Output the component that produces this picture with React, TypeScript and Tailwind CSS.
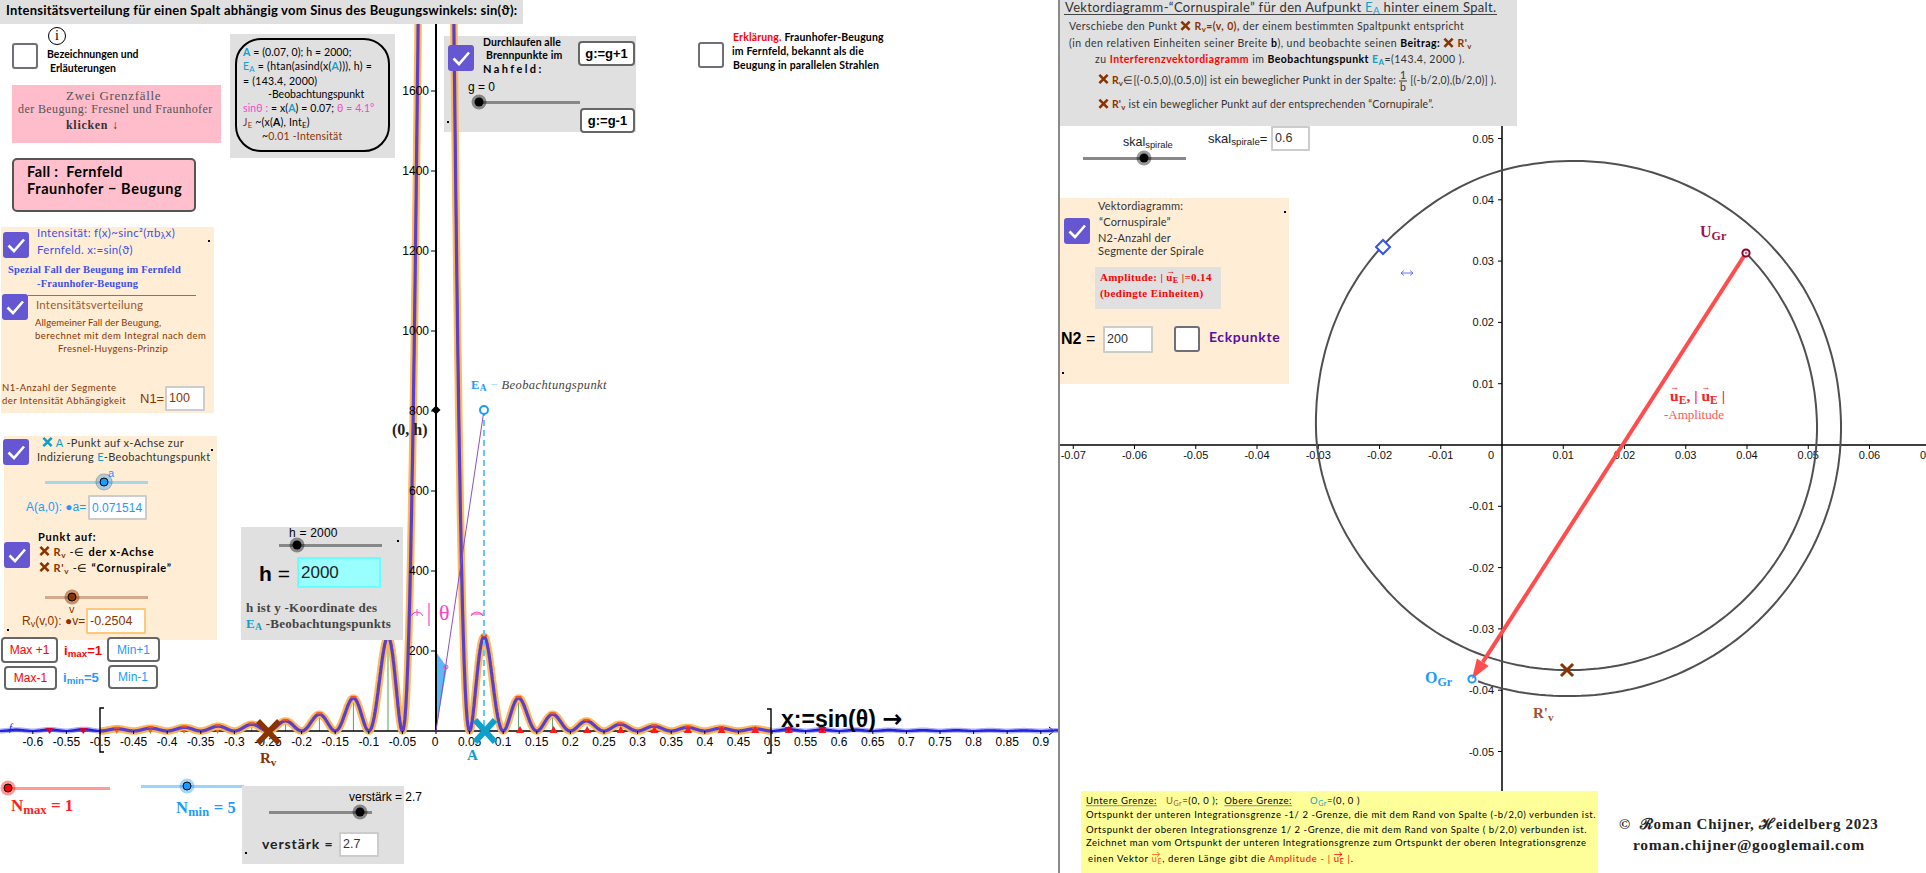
import React from "react";

const SERIF = "font-['Liberation_Serif',serif]";
const ARIAL = "font-['Liberation_Sans',sans-serif]";

type P = { c?: string; children?: React.ReactNode };

const T = ({ c = "", children }: P) => (
  <div className={`absolute whitespace-nowrap leading-none -translate-y-1/2 ${c}`}>{children}</div>
);

const Box = ({ c = "", children }: P) => <div className={`absolute ${c}`}>{children}</div>;

const Dot = ({ c = "" }: P) => <div className={`absolute w-[2px] h-[2px] bg-black ${c}`} />;

const Check = ({ c = "", on = true }: P & { on?: boolean }) =>
  on ? (
    <div className={`absolute w-[26px] h-[26px] rounded-[3px] bg-[#6557d2] flex items-center justify-center ${c}`}>
      <svg width="20" height="20" viewBox="0 0 20 20">
        <path d="M2.5 10.5 L8 16 L18 4.5" fill="none" stroke="#fff" strokeWidth="2.6" />
      </svg>
    </div>
  ) : (
    <div className={`absolute w-[26px] h-[26px] rounded-[3px] bg-white border-2 border-[#6f6f78] ${c}`} />
  );

const Field = ({ c = "", children }: P) => (
  <div className={`absolute flex items-center bg-white border-2 rounded-[1px] pl-[2px] ${ARIAL} ${c}`}>{children}</div>
);

const Btn = ({ c = "", children }: P) => (
  <div className={`absolute flex items-center justify-center bg-white border-2 border-[#666] rounded-[4px] ${ARIAL} ${c}`}>
    {children}
  </div>
);

const Thumb = ({ c = "", halo = "bg-black/40", dot = "bg-black" }: P & { halo?: string; dot?: string }) => (
  <div className={`absolute w-[15px] h-[15px] -translate-x-1/2 -translate-y-1/2 rounded-full flex items-center justify-center ${halo} ${c}`}>
    <div className={`w-[9px] h-[9px] rounded-full ${dot}`} />
  </div>
);

const XMark = ({ color = "#8b3300", s = 11 }: { color?: string; s?: number }) => (
  <svg width={s} height={s} viewBox="0 0 12 12" className="inline-block align-[-1px]">
    <path d="M1.5 1.5 L10.5 10.5 M10.5 1.5 L1.5 10.5" stroke={color} strokeWidth="2.8" />
  </svg>
);

const Vec = ({ c = "" }: P) => (
  <span className={`relative inline-block ${c}`}>
    u<sub>E</sub>
    <span className="absolute left-0 top-[-5px] text-[9px] leading-none">→</span>
  </span>
);

const sinc2 = (x: number) => {
  const u = (Math.PI * x) / 0.05;
  if (Math.abs(u) < 1e-6) return 1;
  const s = Math.sin(u) / u;
  return s * s;
};
const LX = (v: number) => 436 + 672 * v;
const curve = (a: number, b: number) => {
  let d = "";
  for (let x = a; x <= b + 1e-9; x += 0.0005) {
    d += `${d ? "L" : "M"}${LX(x).toFixed(1)} ${(731 - 2000 * sinc2(x)).toFixed(1)}`;
  }
  return d;
};
const fmt = (v: number) => String(Number(v.toFixed(2)));

const LeftPlot = () => {
  const xt: number[] = [];
  for (let k = -12; k <= 18; k++) xt.push(k * 0.05);
  const peaks = [0.0715, 0.1229, 0.1735, 0.2239, 0.2742, 0.3245, 0.3747, 0.4249, 0.4750];
  return (
    <svg width="1059" height="873" viewBox="0 0 1059 873" className={`absolute left-0 top-0 ${ARIAL}`}>
      {/* shaded wedge */}
      <polygon points="436,652 447,667 436,731" fill="#5db8f5" />
      {/* green stems */}
      <line x1={LX(-0.0715)} x2={LX(-0.0715)} y1="731" y2="640" stroke="#a9cfa5" strokeWidth="2" />
      {[-0.1229, -0.1735, -0.2239, -0.2742, 0.1229, 0.1735].map((p) => (
        <line key={p} x1={LX(p)} x2={LX(p)} y1="731" y2={731 - 2000 * sinc2(p)} stroke="#5f9f68" strokeWidth="1" />
      ))}
      {/* axes */}
      <line x1="0" x2="1053" y1="731" y2="731" stroke="#000" strokeWidth="1.5" />
      <path d="M1049 727 L1054 731 L1049 735" fill="none" stroke="#000" strokeWidth="1" />
      <line x1="436" x2="436" y1="24" y2="731" stroke="#000" strokeWidth="2" />
      {/* curves */}
      <path d={curve(-0.65, 1)} fill="none" stroke="#7b7bf0" strokeWidth="5" opacity="0.6" />
      <path d={curve(-0.65, 1)} fill="none" stroke="#2222d8" strokeWidth="2.2" />
      <path d={curve(-0.5, 0.5)} fill="none" stroke="#ffb54d" strokeWidth="7.5" opacity="0.95" strokeLinejoin="round" />
      <path d={curve(-0.5, 0.5)} fill="none" stroke="#5a3fcc" strokeWidth="3.2" strokeLinejoin="round" />
      {/* ticks */}
      {xt.map((v) => (
        <g key={v}>
          <line x1={LX(v)} x2={LX(v)} y1="731" y2="734" stroke="#000" strokeWidth="1" />
          {Math.abs(v) > 1e-6 && (
            <text x={LX(v)} y="746" fontSize="12" textAnchor="middle" fill="#000">
              {fmt(v)}
            </text>
          )}
        </g>
      ))}
      <text x="435" y="746" fontSize="12" textAnchor="middle" fill="#000">0</text>
      {[200, 400, 600, 800, 1000, 1200, 1400, 1600].map((v) => (
        <g key={v}>
          <line x1="431" x2="436" y1={731 - v * 0.4} y2={731 - v * 0.4} stroke="#000" strokeWidth="1" />
          <text x="429" y={735 - v * 0.4} fontSize="12" textAnchor="end" fill="#000">{v}</text>
        </g>
      ))}
      {/* peak markers and triangles */}
      {peaks.map((p) => (
        <g key={p}>
          <rect x={LX(p) - 3} y={729 - 2000 * sinc2(p)} width="6" height="2" fill="#f4511e" />
          <rect x={LX(-p) - 3} y={729 - 2000 * sinc2(p)} width="6" height="2" fill="#f4511e" />
        </g>
      ))}
      {[0.125, 0.175, 0.225, 0.275, 0.325, 0.375, 0.425, 0.475, 0.525, 0.575].map((p) => (
        <polygon key={p} points={`${LX(p) - 4},733 ${LX(p) + 4},733 ${LX(p)},726`} fill="#ff1a1a" />
      ))}
      {[0.525, 0.575].map((p) => (
        <polygon key={p} points={`${LX(p) - 4},727 ${LX(p) + 4},727 ${LX(p)},733`} fill="#d8003c" />
      ))}
      {[-0.575, -0.525].map((p) => (
        <polygon key={p} points={`${LX(p) - 4},728 ${LX(p) + 4},728 ${LX(p)},734`} fill="#d8003c" />
      ))}
      {[-0.475, -0.425, -0.375, -0.325].map((p) => (
        <polygon key={p} points={`${LX(p) - 2},730 ${LX(p) + 2},730 ${LX(p)},734`} fill="#e8651a" />
      ))}
      {/* brackets */}
      <path d="M104 708 H100 V752 H104" fill="none" stroke="#000" strokeWidth="1.4" />
      <path d="M767 709 H771 V753 H767" fill="none" stroke="#000" strokeWidth="1.4" />
      {/* observation lines */}
      <line x1="484" x2="484" y1="410" y2="731" stroke="#66c6ff" strokeWidth="2" strokeDasharray="6 4" />
      <line x1="436" x2="484" y1="731" y2="410" stroke="#8e4fc2" strokeWidth="1" />
      <circle cx="446" cy="667" r="2" fill="none" stroke="#ff40c0" strokeWidth="1" />
      <circle cx="484" cy="410" r="4" fill="#fff" stroke="#1a9bff" strokeWidth="2" />
      <polygon points="436,405.5 440.5,410 436,414.5 431.5,410" fill="#000" />
      {/* theta marks */}
      <line x1="429" x2="429" y1="603" y2="626" stroke="#ff40c0" strokeWidth="1.2" />
      <path d="M411 616 A6.5 6.5 0 0 1 423 616 M417 609 V616 M414 613 L411 616" fill="none" stroke="#ff40c0" strokeWidth="1" />
      <path d="M471 616 A6.5 6.5 0 0 1 483 616 M483 616 L480 613 M471 614 H483" fill="none" stroke="#ff40c0" strokeWidth="1" />
      {/* big crosses */}
      <path d="M475 720 L495 742 M495 720 L475 742" stroke="#0f9fcb" strokeWidth="6" />
      <path d="M258 721 L279 743 M279 721 L258 743" stroke="#8b3300" strokeWidth="5.5" />
    </svg>
  );
};

const RX = (v: number) => 1502 + 6125 * v;
const RY = (v: number) => 445 - 6130 * v;

const spiral = () => {
  const cp = [
    [-44.8, 251], [0, 249], [90, 240], [141, 242], [180, 252], [230, 262], [256, 268],
    [328, 275], [360, 273], [450, 266], [471, 267],
  ];
  let d = "";
  for (let a = -44.8; a <= 471; a += 1.5) {
    let i = 0;
    while (i < cp.length - 2 && a > cp[i + 1][0]) i++;
    const t = (a - cp[i][0]) / (cp[i + 1][0] - cp[i][0]);
    const s = t * t * (3 - 2 * t) * 0.5 + t * 0.5;
    const r = cp[i][1] + (cp[i + 1][1] - cp[i][1]) * s;
    const rad = (a * Math.PI) / 180;
    d += `${d ? "L" : "M"}${(1568 + r * Math.cos(rad)).toFixed(1)} ${(430 + r * Math.sin(rad)).toFixed(1)}`;
  }
  return d;
};

const RightPlot = () => {
  const xt = [-0.07, -0.06, -0.05, -0.04, -0.03, -0.02, -0.01, 0.01, 0.02, 0.03, 0.04, 0.05, 0.06, 0.07];
  const yt = [0.05, 0.04, 0.03, 0.02, 0.01, -0.01, -0.02, -0.03, -0.04, -0.05];
  return (
    <svg width="866" height="873" viewBox="1060 0 866 873" className={`absolute left-0 top-0 ${ARIAL}`}>
      <line x1="1060" x2="1926" y1="445" y2="445" stroke="#000" strokeWidth="1.5" />
      <line x1="1502" x2="1502" y1="126" y2="873" stroke="#000" strokeWidth="1.5" />
      {xt.map((v) => (
        <g key={v}>
          <line x1={RX(v)} x2={RX(v)} y1="445" y2="449" stroke="#000" strokeWidth="1" />
          <text x={RX(v)} y="459" fontSize="11" textAnchor="middle" fill="#111">{fmt(v)}</text>
        </g>
      ))}
      <text x="1491" y="459" fontSize="11" textAnchor="middle" fill="#111">0</text>
      {yt.map((v) => (
        <g key={v}>
          <line x1="1498" x2="1502" y1={RY(v)} y2={RY(v)} stroke="#000" strokeWidth="1" />
          <text x="1494" y={RY(v) + 4} fontSize="11" textAnchor="end" fill="#111">{fmt(v)}</text>
        </g>
      ))}
      <path d={spiral()} fill="none" stroke="#505050" strokeWidth="2" />
      <line x1="1746" y1="253" x2="1482.8" y2="662.2" stroke="#ff4d4d" strokeWidth="4" />
      <polygon points="1472,679 1488.7,666 1476.9,658.4" fill="#ff4d4d" />
      <circle cx="1746" cy="253" r="3.6" fill="#fff" stroke="#8b0033" strokeWidth="2" />
      <circle cx="1746" cy="253" r="1.2" fill="#ff4d4d" />
      <circle cx="1472" cy="679" r="3.6" fill="none" stroke="#1a9bff" strokeWidth="2" />
      <path d="M1561 664 L1573 676 M1573 664 L1561 676" stroke="#8b3300" strokeWidth="3" />
      <polygon points="1383,240 1390,247 1383,254 1376,247" fill="#fff" stroke="#3355ee" strokeWidth="2" />
      <path d="M1401 273 H1413 M1404 270.5 L1401 273 L1404 275.5 M1410 270.5 L1413 273 L1410 275.5" fill="none" stroke="#6677ff" strokeWidth="1" />
    </svg>
  );
};

const LeftPane = () => (
  <div className="relative w-[1058px] h-full shrink-0 overflow-hidden">
    {/* Durchlaufen panel sits under the curve */}
    <Box c="left-[444px] top-[36px] w-[192px] h-[96px] bg-[#e0e0e0]" />
    <LeftPlot />

    {/* Durchlaufen content */}
    <Check c="left-[448px] top-[45px]" />
    <T c="left-[483px] top-[42px] text-[10.5px] font-bold tracking-[0.1px] text-black">Durchlaufen alle</T>
    <T c="left-[486px] top-[55px] text-[10.5px] font-bold tracking-[0.1px] text-black">Brennpunkte im</T>
    <T c="left-[483px] top-[68px] text-[11px] font-bold tracking-[2.4px] text-black">Nahfeld:</T>
    <Btn c="left-[578px] top-[41px] w-[57px] h-[25px] text-[13px] font-bold">g:=g+1</Btn>
    <T c={`left-[468px] top-[87px] text-[12px] ${ARIAL}`}>g = 0</T>
    <Box c="left-[479px] top-[101px] w-[101px] h-[3px] bg-[#888]" />
    <Thumb c="left-[479px] top-[102px]" />
    <Btn c="left-[580px] top-[108px] w-[55px] h-[25px] text-[13px] font-bold">g:=g-1</Btn>
    <Dot c="left-[447px] top-[121px]" />

    {/* Header */}
    <Box c="left-0 top-0 w-[523px] h-[24px] bg-[#e0e0e0]" />
    <T c="left-[6px] top-[10px] text-[13px] font-bold tracking-[0.23px] text-black">
      Intensitätsverteilung für einen Spalt abhängig vom Sinus des Beugungswinkels: sin(ϑ):
    </T>

    {/* Info and Bezeichnungen */}
    <Box c={`left-[48px] top-[27px] w-[18px] h-[18px] rounded-full border border-black flex items-center justify-center text-[14px] leading-none ${SERIF}`}>i</Box>
    <Check on={false} c="left-[12px] top-[43px]" />
    <T c="left-[47px] top-[54px] text-[10.5px] font-bold tracking-[0px] text-black">Bezeichnungen und</T>
    <T c="left-[50px] top-[68px] text-[10.5px] font-bold tracking-[0px] text-black">Erläuterungen</T>

    {/* Pink note */}
    <Box c="left-[12px] top-[85px] w-[209px] h-[58px] bg-[#ffbdcb]" />
    <T c={`left-[66px] top-[95px] text-[13px] tracking-[0.7px] text-[#555] ${SERIF}`}>Zwei Grenzfälle</T>
    <T c={`left-[18px] top-[109px] text-[12px] tracking-[0.4px] text-[#555] ${SERIF}`}>der Beugung: Fresnel und Fraunhofer</T>
    <T c={`left-[66px] top-[125px] text-[12px] font-bold tracking-[0.7px] text-[#333] ${SERIF}`}>klicken ↓</T>

    {/* Fall button */}
    <Box c="left-[12px] top-[158px] w-[184px] h-[54px] bg-[#ffbfcc] border-2 border-[#555] rounded-[5px]" />
    <T c="left-[27px] top-[172px] text-[14.5px] font-bold tracking-[0.4px] text-black whitespace-pre">Fall :  Fernfeld</T>
    <T c="left-[27px] top-[189px] text-[14.5px] font-bold tracking-[0.6px] text-black">Fraunhofer − Beugung</T>

    {/* A / E info */}
    <Box c="left-[230px] top-[34px] w-[165px] h-[124px] bg-[#e0e0e0]" />
    <Box c="left-[235px] top-[38px] w-[155px] h-[114px] border-2 border-black rounded-[26px]" />
    <T c="left-[243px] top-[52px] text-[10.5px] tracking-[0.1px] text-black"><b className="text-[#0ea0d0]">A</b>  = (0.07, 0); h = 2000;</T>
    <T c="left-[243px] top-[66px] text-[10.5px] tracking-[0.25px] text-black"><span className="text-[#0ea0d0]">E<sub>A</sub></span> = (htan(asind(x(<b className="text-[#0ea0d0]">A</b>))), h) =</T>
    <T c="left-[243px] top-[81px] text-[10.5px] tracking-[0.25px] text-black">= (143.4, 2000)</T>
    <T c="left-[268px] top-[94px] text-[10.5px] tracking-[0px] text-black">-Beobachtungspunkt</T>
    <T c="left-[243px] top-[108px] text-[10.5px] tracking-[0.1px] text-[#ff40d0]">sinθ : <span className="text-black">= x(<b className="text-[#0ea0d0]">A</b>) = 0.07;</span> θ = 4.1°</T>
    <T c="left-[243px] top-[122px] text-[10.5px] tracking-[0.2px] text-[#8b3300]">J<sub>E</sub> <span className="text-black">~(x(<b>A</b>), Int<sub>E</sub>)</span></T>
    <T c="left-[262px] top-[136px] text-[10.5px] tracking-[0.2px] text-[#8b3300]"><span className="text-black">~</span>0.01 -Intensität</T>

    {/* Erklärung */}
    <Check on={false} c="left-[698px] top-[42px]" />
    <T c="left-[733px] top-[37px] text-[10.5px] font-bold tracking-[0.15px] text-black"><span className="text-[#ff0000]">Erklärung.</span> Fraunhofer-Beugung</T>
    <T c="left-[732px] top-[51px] text-[10.5px] font-bold tracking-[0.15px] text-black">im Fernfeld, bekannt als die</T>
    <T c="left-[733px] top-[65px] text-[10.5px] font-bold tracking-[0.15px] text-black">Beugung in parallelen Strahlen</T>

    {/* Intensity panel */}
    <Box c="left-[1px] top-[227px] w-[213px] h-[186px] bg-[#ffeed5]" />
    <Check c="left-[3px] top-[232px]" />
    <T c="left-[37px] top-[233px] text-[11.5px] tracking-[0.3px] text-[#3d50ea]">Intensität: f(x)~sinc²(πb<sub>λ</sub>x)</T>
    <T c="left-[37px] top-[250px] text-[11.5px] tracking-[0.3px] text-[#3d50ea]">Fernfeld. x:=sin(ϑ)</T>
    <Dot c="left-[208px] top-[240px]" />
    <T c={`left-[8px] top-[270px] text-[10.5px] font-bold tracking-[0.15px] text-[#3d50ea] ${SERIF}`}>Spezial Fall der Beugung im Fernfeld</T>
    <T c={`left-[37px] top-[284px] text-[10.5px] font-bold tracking-[0.15px] text-[#3d50ea] ${SERIF}`}>-Fraunhofer-Beugung</T>
    <Box c="left-[28px] top-[295px] w-[168px] h-px bg-[#6a6af0]" />
    <Check c="left-[2px] top-[294px]" />
    <T c="left-[36px] top-[305px] text-[11.5px] tracking-[0.2px] text-[#a0582d]">Intensitätsverteilung</T>
    <T c="left-[35px] top-[323px] text-[9.5px] tracking-[0.1px] text-[#8b3300]">Allgemeiner Fall der Beugung,</T>
    <T c="left-[35px] top-[336px] text-[9.5px] tracking-[0.45px] text-[#8b3300]">berechnet mit dem Integral nach dem</T>
    <T c="left-[58px] top-[349px] text-[9.5px] tracking-[0.35px] text-[#8b3300]">Fresnel-Huygens-Prinzip</T>
    <T c="left-[2px] top-[388px] text-[9.5px] tracking-[0.45px] text-[#8b3300]">N1-Anzahl der Segmente</T>
    <T c="left-[2px] top-[401px] text-[9.5px] tracking-[0.45px] text-[#8b3300]">der Intensität Abhängigkeit</T>
    <T c={`left-[140px] top-[398px] text-[13px] text-[#8b3300] ${ARIAL}`}>N1=</T>
    <Field c="left-[165px] top-[386px] w-[40px] h-[25px] border-[#ccc] text-[12.5px] text-[#8b3300]">100</Field>

    {/* Point A panel */}
    <Box c="left-[4px] top-[436px] w-[213px] h-[204px] bg-[#ffeed5]" />
    <Check c="left-[3px] top-[439px]" />
    <T c="left-[42px] top-[442px] text-[11px] tracking-[0.35px] text-[#333]"><XMark color="#0f9fcb" /> <span className="text-[#0f9fcb]">A</span> -Punkt auf x-Achse zur</T>
    <T c="left-[37px] top-[456px] text-[11px] tracking-[0.33px] text-[#333]">Indizierung <span className="text-[#0f9fcb]">E</span>-Beobachtungspunkt</T>
    <Dot c="left-[211px] top-[449px]" />
    <T c={`left-[108px] top-[473px] text-[11px] text-[#1a9bff] ${ARIAL}`}>a</T>
    <Box c="left-[45px] top-[481px] w-[103px] h-[3px] bg-[#a5d6ec]" />
    <Thumb c="left-[104px] top-[482px] ring-1 ring-black/30" halo="bg-[#1a9bff]/40" dot="bg-[#1a9bff] border border-black" />
    <T c={`left-[26px] top-[507px] text-[12px] text-[#1a9bff] ${ARIAL}`}>A(a,0): ●a=</T>
    <Field c="left-[88px] top-[495px] w-[59px] h-[25px] border-[#ccc] text-[12px] text-[#1a9bff]">0.071514</Field>
    <Check c="left-[4px] top-[542px]" />
    <T c="left-[38px] top-[536px] text-[11px] font-bold tracking-[0.8px] text-black">Punkt auf:</T>
    <T c="left-[39px] top-[551px] text-[11px] font-bold tracking-[0.7px] text-black"><XMark /> <span className="text-[#8b3300]">R<sub>v</sub></span> <span className="font-normal">-∈</span> der x-Achse</T>
    <T c="left-[39px] top-[567px] text-[11px] font-bold tracking-[0.7px] text-black"><XMark /> <span className="text-[#8b3300]">R'<sub>v</sub></span> <span className="font-normal">-∈</span> “Cornuspirale”</T>
    <Box c="left-[45px] top-[596px] w-[103px] h-[3px] bg-[#d5a98a]" />
    <Thumb c="left-[72px] top-[597px]" halo="bg-[#8b3300]/50" dot="bg-[#8b3300] border border-black" />
    <T c={`left-[69px] top-[609px] text-[11px] text-[#8b3300] ${ARIAL}`}>v</T>
    <T c={`left-[22px] top-[621px] text-[12px] text-[#8b3300] ${ARIAL}`}>R<sub>v</sub>(v,0): ●v=</T>
    <Field c="left-[86px] top-[608px] w-[60px] h-[26px] border-[#ffc87a] text-[12.5px] text-[#8b3300]">-0.2504</Field>
    <Dot c="left-[7px] top-[629px]" />

    {/* Max/Min buttons */}
    <Btn c="left-[1px] top-[637px] w-[57px] h-[26px] text-[12px] text-[#ff0000]">Max +1</Btn>
    <Btn c="left-[107px] top-[637px] w-[53px] h-[25px] text-[12px] text-[#1a9bff]">Min+1</Btn>
    <Btn c="left-[4px] top-[666px] w-[53px] h-[24px] text-[12px] text-[#ff0000]">Max-1</Btn>
    <Btn c="left-[108px] top-[665px] w-[50px] h-[24px] text-[12px] text-[#1a9bff]">Min-1</Btn>
    <T c={`left-[64px] top-[650px] text-[13px] font-bold text-[#ff0000] ${ARIAL}`}>i<sub>max</sub>=1</T>
    <T c={`left-[63px] top-[677px] text-[13px] font-bold text-[#1a9bff] ${ARIAL}`}>i<sub>min</sub>=5</T>

    {/* h panel */}
    <Box c="left-[241px] top-[527px] w-[162px] h-[113px] bg-[#e0e0e0]" />
    <T c={`left-[289px] top-[533px] text-[12px] tracking-[0.2px] text-black ${ARIAL}`}>h = 2000</T>
    <Dot c="left-[397px] top-[540px]" />
    <Box c="left-[279px] top-[544px] w-[103px] h-[3px] bg-[#888]" />
    <Thumb c="left-[297px] top-[545px]" />
    <T c={`left-[259px] top-[573px] text-[21px] font-bold text-black ${ARIAL}`}>h <span className="font-normal">=</span></T>
    <Field c="left-[297px] top-[557px] w-[84px] h-[31px] bg-[#99ffff]! border-[#66ffff] text-[17px] text-[#222]">2000</Field>
    <T c={`left-[246px] top-[607px] text-[13px] font-bold tracking-[0.25px] text-[#444] ${SERIF}`}>h ist y -Koordinate des</T>
    <T c={`left-[246px] top-[623px] text-[13px] font-bold tracking-[0.25px] text-[#444] ${SERIF}`}><span className="text-[#0f9fcb]">E<sub>A</sub></span> -Beobachtungspunkts</T>

    {/* plot labels */}
    <T c={`left-[471px] top-[385px] text-[12.5px] tracking-[0.4px] text-[#444] italic ${SERIF}`}><b className="not-italic text-[#1a9bff]">E<sub>A</sub></b> <span className="not-italic text-[#a5dcff] font-bold">−</span> Beobachtungspunkt</T>
    <T c={`left-[392px] top-[430px] text-[16px] font-bold text-[#222] ${SERIF}`}>(0, h)</T>
    <T c={`left-[439px] top-[613px] text-[22px] text-[#ff40c0] ${SERIF}`}>θ</T>
    <T c={`left-[467px] top-[755px] text-[15px] font-bold text-[#0f9fcb] ${SERIF}`}>A</T>
    <T c={`left-[260px] top-[758px] text-[15px] font-bold text-[#8b3300] ${SERIF}`}>R<sub>v</sub></T>
    <T c={`left-[9px] top-[727px] text-[11px] italic text-[#2222d8] ${SERIF}`}>f</T>
    <T c={`left-[781px] top-[719px] text-[23px] font-bold text-black ${ARIAL}`}>x:=sin(θ) <span className="font-['DejaVu_Sans',sans-serif] font-bold text-[24px]">→</span></T>

    {/* N sliders */}
    <Box c="left-[8px] top-[787px] w-[102px] h-[3px] bg-[#ff9a9a]" />
    <Thumb c="left-[8px] top-[788px]" halo="bg-[#ff0000]/40" dot="bg-[#ff0000] border border-black" />
    <T c={`left-[11px] top-[805px] text-[17px] font-bold text-[#ff2020] ${SERIF}`}>N<sub>max</sub> = 1</T>
    <Box c="left-[141px] top-[785px] w-[103px] h-[3px] bg-[#99d6ff]" />
    <Thumb c="left-[187px] top-[786px]" halo="bg-[#1a9bff]/40" dot="bg-[#1a9bff] border border-black" />
    <T c={`left-[176px] top-[808px] text-[16.5px] font-bold tracking-[0.2px] text-[#1a9bff] ${SERIF}`}>N<sub>min</sub> = 5</T>

    {/* verstärk panel */}
    <Box c="left-[242px] top-[786px] w-[162px] h-[78px] bg-[#e0e0e0]" />
    <T c={`left-[349px] top-[797px] text-[12px] text-black ${ARIAL}`}>verstärk = 2.7</T>
    <Box c="left-[269px] top-[811px] w-[103px] h-[3px] bg-[#888]" />
    <Thumb c="left-[360px] top-[812px]" />
    <T c="left-[262px] top-[844px] text-[14px] font-bold tracking-[0.9px] text-[#222]">verstärk =</T>
    <Field c="left-[339px] top-[832px] w-[40px] h-[25px] border-[#ccc] text-[12.5px] text-[#333]">2.7</Field>
    <Dot c="left-[245px] top-[852px]" />
  </div>
);

const RightPane = () => (
  <div className="relative flex-1 h-full overflow-hidden border-l-2 border-[#8a8a8a]">
    <RightPlot />
    {/* Header panel */}
    <Box c="left-0 top-0 w-[457px] h-[126px] bg-[#e0e0e0]" />
    <T c="left-[5px] top-[7px] text-[13px] tracking-[0.34px] text-[#333]">
      Vektordiagramm-“Cornuspirale” für den Aufpunkt <span className="text-[#0f9fcb]">E<sub>A</sub></span> hinter einem Spalt.
    </T>
    <Box c="left-[4px] top-[14px] w-[433px] h-px bg-[#444]" />
    <T c="left-[9px] top-[26px] text-[10.5px] tracking-[0.4px] text-[#333]">
      Verschiebe den Punkt <XMark /> <b className="text-[#8b3300]">R<sub>v</sub>=(v, 0),</b> der einem bestimmten Spaltpunkt entspricht
    </T>
    <T c="left-[9px] top-[43px] text-[10.5px] tracking-[0.45px] text-[#333]">
      (in den relativen Einheiten seiner Breite  <b className="text-black">b</b>), und beobachte seinen <b className="text-black">Beitrag:</b> <XMark /> <b className="text-[#8b3300]">R'<sub>v</sub></b>
    </T>
    <T c="left-[35px] top-[59px] text-[10.5px] tracking-[0.45px] text-[#333]">
      zu <b className="text-[#ff0000]">Interferenzvektordiagramm</b> im <b className="text-black">Beobachtungspunkt</b> <b className="text-[#0f9fcb]">E<sub>A</sub></b>=(143.4, 2000 ).
    </T>
    <T c="left-[38px] top-[81px] text-[10.5px] tracking-[0.2px] text-[#333]">
      <XMark /> <b className="text-[#8b3300]">R<sub>v</sub></b>∈[(-0.5,0),(0.5,0)] ist ein beweglicher Punkt in der Spalte:{" "}
      <span className="inline-flex flex-col items-center align-middle leading-[11px]">
        <span className="border-b border-[#333] px-[1px]">1</span>
        <span>b</span>
      </span>{" "}
      [(-b/2,0),(b/2,0)] ).
    </T>
    <T c="left-[38px] top-[104px] text-[10.5px] tracking-[0.2px] text-[#333]">
      <XMark /> <b className="text-[#8b3300]">R'<sub>v</sub></b>  ist ein beweglicher Punkt auf der entsprechenden “Cornupirale”.
    </T>

    {/* skal */}
    <T c={`left-[63px] top-[142px] text-[12.5px] text-[#222] ${ARIAL}`}>skal<sub>spirale</sub></T>
    <Box c="left-[23px] top-[157px] w-[103px] h-[3px] bg-[#888]" />
    <Thumb c="left-[84px] top-[158px]" />
    <T c={`left-[148px] top-[138px] text-[13px] text-[#222] ${ARIAL}`}>skal<sub>spirale</sub>=</T>
    <Field c="left-[211px] top-[126px] w-[39px] h-[25px] border-[#ccc] text-[12.5px] text-[#333]">0.6</Field>

    {/* Cream panel */}
    <Box c="left-0 top-[198px] w-[229px] h-[186px] bg-[#ffeed5]" />
    <Check c="left-[4px] top-[218px]" />
    <T c="left-[38px] top-[205px] text-[11px] tracking-[0.2px] text-[#333]">Vektordiagramm:</T>
    <T c="left-[39px] top-[221px] text-[11px] tracking-[0.2px] text-[#333]">“Cornuspirale”</T>
    <T c="left-[38px] top-[237px] text-[11px] tracking-[0.2px] text-[#333]">N2-Anzahl der</T>
    <T c="left-[38px] top-[250px] text-[11px] tracking-[0.2px] text-[#333]">Segmente der Spirale</T>
    <Dot c="left-[224px] top-[211px]" />
    <Box c="left-[35px] top-[267px] w-[126px] h-[42px] bg-[#e0e0e0]" />
    <T c={`left-[40px] top-[277px] text-[11px] font-bold tracking-[0.35px] text-[#ff0000] ${SERIF}`}>Amplitude: | <Vec /> |=0.14</T>
    <T c={`left-[40px] top-[293px] text-[11px] font-bold tracking-[0.4px] text-[#ff0000] ${SERIF}`}>(bedingte  Einheiten)</T>
    <T c={`left-[1px] top-[339px] text-[16px] font-bold text-black ${ARIAL}`}>N2 <span className="font-normal">=</span></T>
    <Field c="left-[43px] top-[326px] w-[50px] h-[27px] border-[#ccc] text-[12.5px] text-[#333]">200</Field>
    <Check on={false} c="left-[114px] top-[326px]" />
    <T c="left-[149px] top-[337px] text-[14px] font-bold tracking-[0.6px] text-[#5b0ea0]">Eckpunkte</T>
    <Dot c="left-[2px] top-[372px]" />

    {/* Plot labels */}
    <T c={`left-[640px] top-[232px] text-[16px] font-bold text-[#a0104a] ${SERIF}`}>U<sub>Gr</sub></T>
    <T c={`left-[365px] top-[678px] text-[16px] font-bold text-[#1a9bff] ${SERIF}`}>O<sub>Gr</sub></T>
    <T c={`left-[473px] top-[713px] text-[15px] font-bold text-[#a0522d] ${SERIF}`}>R'<sub>v</sub></T>
    <T c={`left-[610px] top-[396px] text-[15.5px] font-bold text-[#ff2020] ${SERIF}`}><Vec />, | <Vec /> |</T>
    <T c={`left-[604px] top-[414px] text-[13px] text-[#ff5555] ${SERIF}`}>-Amplitude</T>

    {/* Yellow note */}
    <Box c="left-[21px] top-[791px] w-[517px] h-[82px] bg-[#ffff99]" />
    <T c="left-[26px] top-[801px] text-[9.5px] tracking-[0.55px] text-black whitespace-pre"><span className="underline decoration-[#888]">Untere Grenze:</span>   <span className="text-[#a0522d]">U<sub>Gr</sub></span>=(0, 0 );  <span className="underline decoration-[#888]">Obere Grenze:</span>      <span className="text-[#0f9fcb]">O<sub>Gr</sub></span>=(0, 0 )</T>
    <T c="left-[26px] top-[815px] text-[9.5px] tracking-[0.55px] text-black">Ortspunkt der unteren Integrationsgrenze  -1/ 2 -Grenze, die mit dem Rand von Spalte (-b/2,0) verbunden ist.</T>
    <T c="left-[26px] top-[830px] text-[9.5px] tracking-[0.55px] text-black">Ortspunkt der oberen Integrationsgrenze    1/ 2 -Grenze, die mit dem Rand von Spalte ( b/2,0) verbunden ist.</T>
    <T c="left-[26px] top-[843px] text-[9.5px] tracking-[0.55px] text-black">Zeichnet man vom Ortspunkt der unteren Integrationsgrenze zum Ortspunkt der oberen Integrationsgrenze</T>
    <T c="left-[28px] top-[859px] text-[9.5px] tracking-[0.65px] text-black">einen Vektor <Vec c="text-[#ff5a1a]" />, deren Länge gibt die <span className="text-[#ff0000]">Amplitude -</span> <span className="text-[#ff0000]">| <Vec /> |</span>.</T>

    {/* Credit */}
    <T c={`left-[559px] top-[824px] text-[15px] font-bold tracking-[0.7px] text-[#222] whitespace-pre ${SERIF}`}>©  ℛoman Chijner, ℋeidelberg 2023</T>
    <T c={`left-[573px] top-[845px] text-[15.5px] font-bold tracking-[0.7px] text-[#222] ${SERIF}`}>roman.chijner@googlemail.com</T>
  </div>
);

export default function App() {
  return (
    <div className="flex w-[1926px] h-[873px] overflow-hidden bg-white font-['Lato',sans-serif] whitespace-pre">
      <LeftPane />
      <RightPane />
    </div>
  );
}
